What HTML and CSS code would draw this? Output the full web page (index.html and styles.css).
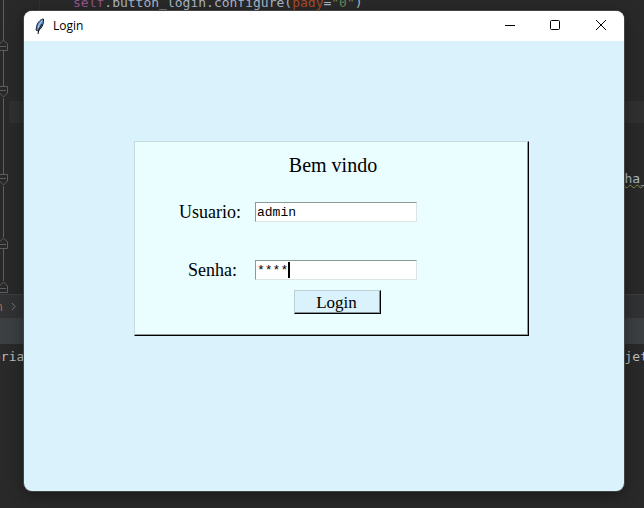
FILE: index.html
```html
<!DOCTYPE html>
<html lang="pt-BR">
<head>
<meta charset="utf-8">
<title>Login</title>
<link rel="stylesheet" href="styles.css">
</head>
<body>
<div class="desktop">
  <div class="editor">
    <div class="code">
      <svg class="folds" width="9" height="294" viewBox="0 0 9 294" fill="none" stroke="#5c5f61" aria-hidden="true">
        <path d="M3.5 0V40M3.5 51V86M3.5 98V174M3.5 186V237M3.5 249V281"/>
        <path d="M-1 50.500H7.500V44L3.500 40L-1 44.500M0 46.500H6"/>
        <path d="M-1 86.500H7.500V93L3.500 97L-1 92.500M0 90.500H6"/>
        <path d="M-1 174.500H7.500V181L3.500 185L-1 180.500M0 178.500H6"/>
        <path d="M-1 248.500H7.500V242L3.500 238L-1 242.500M0 244.500H6"/>
        <path d="M-1 292.500H7.500V286L3.500 282L-1 286.500M0 288.500H6"/>
      </svg>
      <div class="lines">
        <div class="line first"><span class="self">self</span>.button_login.configure(<span class="arg">pady</span>=<span class="str">"0"</span>)</div>
        <div class="line current"></div>
        <div class="line clipped"><span class="typo">ha_</span></div>
      </div>
    </div>
    <div class="crumbs"><span class="crumb">n</span><svg width="5" height="9" viewBox="0 0 5 9" fill="none" stroke="#777" aria-hidden="true"><path d="M1 1L4 4.500L1 8"/></svg></div>
    <div class="toolbar"></div>
    <div class="console"><span class="left">oria</span><span class="right">jet</span></div>
  </div>

  <main class="window">
    <header class="titlebar">
      <svg class="feather" width="12" height="18" viewBox="0 0 12 18" aria-hidden="true">
        <path d="M9.500 2C7 2 4 5 3 8L2 13L4 14C7 12 10 8 9.500 2Z" fill="#5d8fc4" stroke="#182536"/>
        <path d="M8 4C6 6 5 8 4 11" fill="none" stroke="#b9d4ef"/>
        <path d="M8 7L5 12L4 17" fill="none" stroke="#111"/>
      </svg>
      <h1 class="title">Login</h1>
      <div class="controls">
        <button class="control" type="button" aria-label="Minimizar"><svg width="12" height="12" viewBox="0 0 12 12"><path d="M2 6.500H12"/></svg></button>
        <button class="control" type="button" aria-label="Maximizar"><svg width="12" height="12" viewBox="0 0 12 12"><rect x="1.500" y="1.500" width="9" height="9" rx="1"/></svg></button>
        <button class="control" type="button" aria-label="Fechar"><svg width="12" height="12" viewBox="0 0 12 12"><path d="M1 1L11 11M11 1L1 11"/></svg></button>
      </div>
    </header>
    <div class="content">
      <form class="panel">
        <h2 class="welcome">Bem vindo</h2>
        <div class="field">
          <label for="user">Usuario:</label>
          <input id="user" type="text" value="admin">
        </div>
        <div class="field password">
          <label for="pass">Senha:</label>
          <div class="entry"><input id="pass" type="text" value="****" autocomplete="off"><span class="caret"></span></div>
        </div>
        <button class="submit" type="button">Login</button>
      </form>
    </div>
  </main>
</div>
</body>
</html>
```
FILE: styles.css
```css
* { box-sizing: border-box; }

body {
  margin: 0;
  background: #2b2b2b;
  color: #000;
  font-family: "Liberation Serif", serif;
}

.desktop {
  display: grid;
  grid-template: minmax(100vh, auto) / minmax(0, 1fr);
}

.editor, .window { grid-area: 1 / 1; }

/* editor behind the dialog */
.editor {
  display: flex;
  flex-direction: column;
  overflow: hidden;
  background: #292929;
  color: #a9b7c6;
  font: 13px/20px "DejaVu Sans Mono", monospace;
}

.code { display: flex; height: 294px; }
.folds { flex: none; }

.lines {
  flex: 1;
  display: flex;
  flex-direction: column;
}

.line { height: 22px; white-space: pre; }
.first { height: 101px; margin-left: 30px; padding-left: 33px; border-left: 1px solid #323232; line-height: 6px; }
.current { background: #303030; }
.clipped { margin: 46px -4px 0 0; text-align: right; }
.self { color: #94558d; }
.arg { color: #aa4926; }
.str { color: #6a8759; }
.typo { text-decoration: underline wavy #8b8b50 1px; }

.crumbs {
  display: flex;
  align-items: center;
  gap: 8px;
  height: 24px;
  border-top: 1px solid #3c3f41;
  background: #303234;
  overflow: hidden;
}

.crumb { width: 3px; direction: rtl; overflow: hidden; color: #a06a50; }
.toolbar { height: 26px; background: #3b3f42; }

.console {
  flex: 1;
  display: flex;
  justify-content: space-between;
  padding-top: 3px;
  color: #bbb;
}

.left { margin-left: -7px; }
.right { margin-right: -4px; }

/* dialog */
.window {
  display: flex;
  flex-direction: column;
  margin: 11px 20px 17px 24px;
  overflow: hidden;
  border-radius: 8px;
  background: #daf2fc;
  box-shadow: 0 0 0 1px #444, 0 4px 16px #0006;
}

.titlebar {
  display: flex;
  align-items: center;
  height: 30px;
  padding-left: 10px;
  background: #fff;
}

.title {
  flex: 1;
  margin: 0 0 0 7px;
  font: 12px/16px "Open Sans", sans-serif;
}

.controls { display: flex; align-self: stretch; }

.control {
  display: grid;
  place-items: center;
  width: 46px;
  padding: 0 0 2px;
  border: 0;
  background: none;
}

.control svg { fill: none; stroke: #000; }

.content {
  flex: 1;
  padding: 100px 95px 100px 110px;
}

.panel {
  display: flex;
  flex-direction: column;
  height: 195px;
  padding: 11px 0 0;
  border: 1px solid #c4dcdf;
  border-right-color: #000;
  border-bottom-color: #000;
  background: #eafdff;
  box-shadow: inset -1px -1px #8d9999;
}

.welcome {
  margin: 0 0 25px;
  padding-left: 3px;
  font-size: 20px;
  font-weight: 400;
  line-height: 24px;
  text-align: center;
}

.field {
  display: grid;
  grid-template-columns: 120px 162px;
  align-items: center;
  height: 20px;
  margin-bottom: 38px;
}

.field label {
  padding-right: 14px;
  font-size: 18px;
  line-height: 20px;
  text-align: right;
}

.field input {
  width: 100%;
  height: 20px;
  padding: 0 1px;
  border: 1px solid #dce4e5;
  border-top-color: #8d9999;
  border-left-color: #8d9999;
  border-radius: 0;
  background: #fff;
  color: #000;
  font: 13px/18px "Liberation Mono", monospace;
  outline: 0;
}

.password { margin-bottom: 10px; }
.password label { padding-right: 18px; }
.entry { position: relative; display: flex; }

.caret {
  position: absolute;
  top: 2px;
  left: 33px;
  width: 2px;
  height: 16px;
  background: #000;
}

.submit {
  width: 87px;
  height: 24px;
  margin-left: 159px;
  padding: 2px 2px 0 0;
  border: 1px solid #b9ced6;
  border-right-color: #000;
  border-bottom-color: #000;
  border-radius: 0;
  background: #daf2fc;
  box-shadow: inset -1px -1px #83939a;
  color: #000;
  font: 17px/20px "Liberation Serif", serif;
}
```
